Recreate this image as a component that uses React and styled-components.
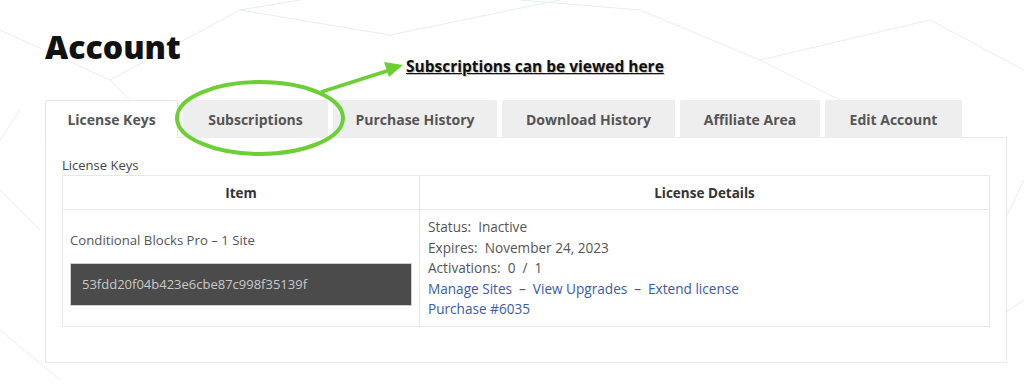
import React from 'react';
import styled, { createGlobalStyle } from 'styled-components';

const Global = createGlobalStyle`
    body {
        margin: 0;
        background: #ffffff;
        font-family: "Open Sans", "Liberation Sans", sans-serif;
        color: #555;
    }
`

const Page = styled.div`
    position: relative;
    width: 1024px;
    height: 386px;
    overflow: hidden;
    padding: 27px 0 0 45px;
    box-sizing: border-box;
`
const Backdrop = styled.svg`
    position: absolute;
    left: 0;
    top: 0;
    z-index: 0;
`
const Content = styled.div`
    position: relative;
    z-index: 1;
    width: 962px;
`
const Title = styled.h1`
    margin: 0;
    font-size: 32px;
    line-height: 40px;
    font-weight: 800;
    color: #111;
`
const Tabs = styled.div`
    display: flex;
    gap: 5px;
    margin-top: 33px;
`
const Tab = styled.div`
    width: ${p => p.$w}px;
    height: 38px;
    box-sizing: border-box;
    display: flex;
    align-items: center;
    justify-content: center;
    font-size: 14px;
    font-weight: 700;
    color: #555;
    background: ${p => p.$active ? '#fff' : '#eeeeee'};
    border: 1px solid ${p => p.$active ? '#e6e6e6' : '#eeeeee'};
    border-bottom: none;
    border-radius: 2px 2px 0 0;
    margin-bottom: -1px;
    position: relative;
    z-index: 2;
`
const Panel = styled.div`
    border: 1px solid #e8e8e8;
    background: #fff;
    padding: 17px 16px 35px;
`
const Label = styled.div`
    font-size: 13px;
    line-height: 20px;
    color: #444;
`
const Table = styled.table`
    width: 100%;
    border-collapse: collapse;
    font-size: 13px;
    th, td {
        border: 1px solid #e8e8e8;
    }
    th {
        height: 33px;
        padding: 0;
        font-size: 13.5px;
        font-weight: 700;
        color: #333;
        text-align: center;
    }
`
const ItemCell = styled.td`
    width: 342px;
    padding: 0 7px;
    vertical-align: middle;
`
const DetailCell = styled.td`
    padding: 7px 8px 6px;
    vertical-align: top;
    font-size: 13.6px;
    line-height: 20.5px;
    color: #555;
`
const ItemName = styled.div`
    font-size: 13.2px;
    line-height: 20px;
    color: #555;
`
const KeyBox = styled.div`
    margin-top: 13px;
    height: 43px;
    box-sizing: border-box;
    background: #4b4b4b;
    border: 1px solid #cfcfcf;
    color: #c9c9c9;
    font-size: 13px;
    display: flex;
    align-items: center;
    padding-left: 11px;
`
const Link = styled.a`
    color: #3b5ba5;
    text-decoration: none;
`
const Dash = styled.span`
    margin: 0 7px;
`
const Note = styled.div`
    position: absolute;
    left: 406px;
    top: 55px;
    z-index: 3;
    font-size: 15.5px;
    font-weight: 700;
    color: #111;
    text-decoration: underline;
    text-shadow: 1px 1px 1px #bbb;
`
const Overlay = styled.svg`
    position: absolute;
    left: 0;
    top: 0;
    z-index: 3;
    pointer-events: none;
`

const lines = [
    [0, 30, 110, 80], [110, 80, 240, 10], [240, 10, 390, 35], [390, 35, 560, 0],
    [110, 80, 130, 100], [640, 10, 760, 60], [760, 60, 930, 20], [930, 20, 1024, 70],
    [760, 60, 840, 100], [0, 190, 40, 230], [1024, 180, 1000, 230], [0, 330, 60, 380],
    [980, 330, 1024, 300], [20, 110, 0, 140], [520, 0, 640, 10], [300, 0, 240, 10],
]

const tabs = [
    { label: 'License Keys', w: 133, active: true },
    { label: 'Subscriptions', w: 145 },
    { label: 'Purchase History', w: 164 },
    { label: 'Download History', w: 173 },
    { label: 'Affiliate Area', w: 140 },
    { label: 'Edit Account', w: 137 },
]

const App = () => {
    return (
        <Page>
            <Global />
            <Backdrop width="1024" height="386">
                {lines.map((l, i) => (
                    <line key={i} x1={l[0]} y1={l[1]} x2={l[2]} y2={l[3]} stroke="#e4eef2" strokeWidth="1" />
                ))}
            </Backdrop>
            <Content>
                <Title>Account</Title>
                <Tabs>
                    {tabs.map(t => (
                        <Tab key={t.label} $w={t.w} $active={t.active}>{t.label}</Tab>
                    ))}
                </Tabs>
                <Panel>
                    <Label>License Keys</Label>
                    <Table>
                        <thead>
                            <tr>
                                <th>Item</th>
                                <th>License Details</th>
                            </tr>
                        </thead>
                        <tbody>
                            <tr>
                                <ItemCell>
                                    <ItemName>Conditional Blocks Pro – 1 Site</ItemName>
                                    <KeyBox>53fdd20f04b423e6cbe87c998f35139f</KeyBox>
                                </ItemCell>
                                <DetailCell>
                                    <div>Status:&nbsp; Inactive</div>
                                    <div>Expires:&nbsp; November 24, 2023</div>
                                    <div>Activations:&nbsp; 0 &nbsp;/&nbsp; 1</div>
                                    <div>
                                        <Link>Manage Sites</Link><Dash>–</Dash>
                                        <Link>View Upgrades</Link><Dash>–</Dash>
                                        <Link>Extend license</Link>
                                    </div>
                                    <div><Link>Purchase #6035</Link></div>
                                </DetailCell>
                            </tr>
                        </tbody>
                    </Table>
                </Panel>
            </Content>
            <Note>Subscriptions can be viewed here</Note>
            <Overlay width="1024" height="386">
                <ellipse cx="260" cy="118" rx="83" ry="36" fill="none" stroke="#6ccf36" strokeWidth="4" />
                <line x1="321" y1="92" x2="390" y2="70" stroke="#6ccf36" strokeWidth="3.5" />
                <polygon points="403,65 384,62 389,77" fill="#6ccf36" />
            </Overlay>
        </Page>
    )
}

export default App;
